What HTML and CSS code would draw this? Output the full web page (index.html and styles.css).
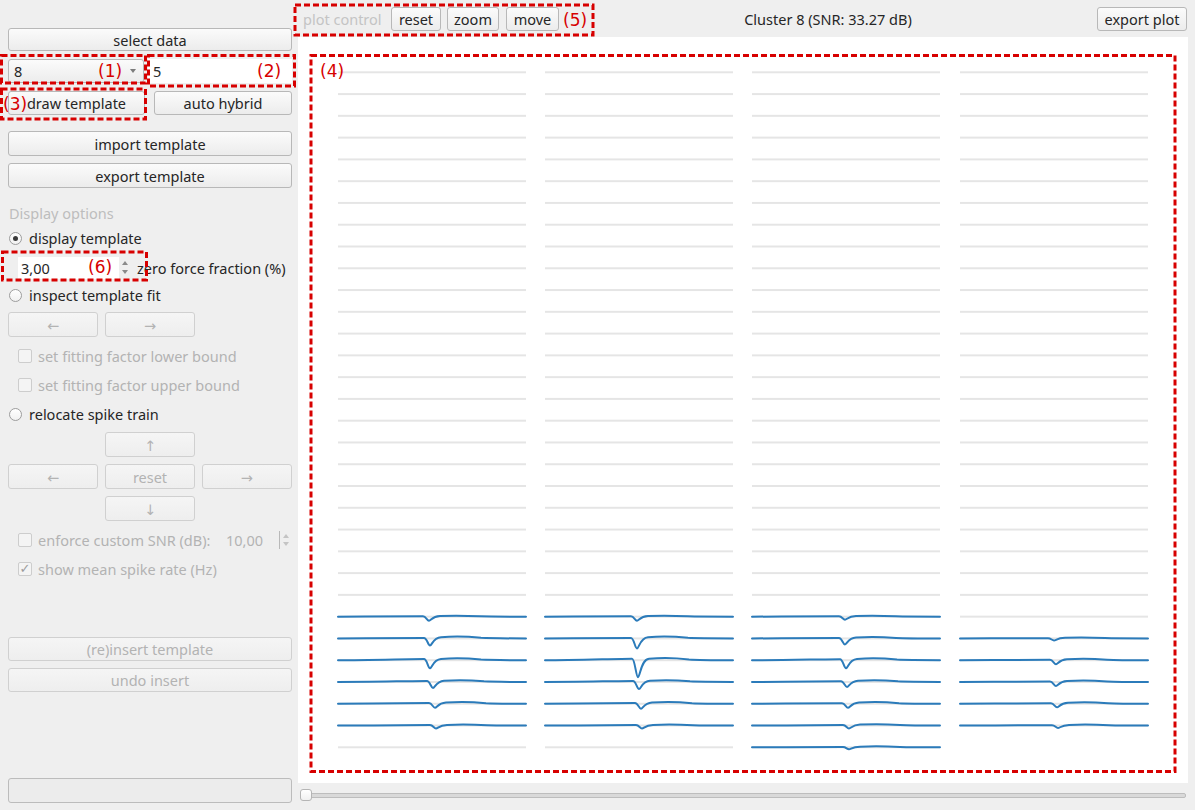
FILE: index.html
```html
<!DOCTYPE html>
<html>
<head>
<meta charset="utf-8">
<title>Template editor</title>
<link rel="stylesheet" href="styles.css">
</head>
<body>
<div class="app">
  <aside class="side">
    <button class="btn b-select">select data</button>
    <div class="row-combo">
      <div class="combo"><span class="combo-val">8</span><span class="caret"></span></div>
      <div class="lineedit">5</div>
    </div>
    <div class="row-2">
      <button class="btn">draw template</button>
      <button class="btn">auto hybrid</button>
    </div>
    <button class="btn b-import">import template</button>
    <button class="btn b-export">export template</button>
    <div class="group-title">Display options</div>
    <div class="opt r-display"><span class="radio checked"></span><span>display template</span></div>
    <div class="spin-row">
      <div class="spinbox">3,00</div>
      <div class="spin-arrows"><span class="up"></span><span class="down"></span></div>
      <span class="spin-label">zero force fraction (%)</span>
    </div>
    <div class="opt r-inspect"><span class="radio"></span><span>inspect template fit</span></div>
    <div class="grid3 g-fit">
      <button class="btn dis">←</button>
      <button class="btn dis">→</button>
    </div>
    <div class="opt check-row c-lower dis"><span class="check"></span><span>set fitting factor lower bound</span></div>
    <div class="opt check-row c-upper dis"><span class="check"></span><span>set fitting factor upper bound</span></div>
    <div class="opt r-relocate"><span class="radio"></span><span>relocate spike train</span></div>
    <div class="grid3 g-up"><button class="btn dis col2">↑</button></div>
    <div class="grid3 g-mid">
      <button class="btn dis">←</button>
      <button class="btn dis">reset</button>
      <button class="btn dis">→</button>
    </div>
    <div class="grid3 g-down"><button class="btn dis col2">↓</button></div>
    <div class="opt check-row c-snr dis">
      <span class="check"></span><span>enforce custom SNR (dB):</span>
      <span class="snr-val">10,00</span>
      <span class="snr-spin"><span class="up"></span><span class="down"></span></span>
    </div>
    <div class="opt check-row c-rate dis"><span class="check checked">✓</span><span>show mean spike rate (Hz)</span></div>
    <button class="btn dis b-reinsert">(re)insert template</button>
    <button class="btn dis b-undo">undo insert</button>
    <div class="progress"></div>
  </aside>

  <main class="pane">
    <div class="plotbar">
      <span class="pc-label">plot control</span>
      <button class="btn tb b-reset">reset</button>
      <button class="btn tb b-zoom">zoom</button>
      <button class="btn tb b-move">move</button>
      <div class="plot-title">Cluster 8 (SNR: 33.27 dB)</div>
      <button class="btn tb b-expplot">export plot</button>
    </div>
    <div class="canvas">
      <svg class="plot" width="890" height="746" viewBox="0 0 890 746">
        <defs>
          <pattern id="rows" patternUnits="userSpaceOnUse" x="0" y="24.413" width="890" height="21.774">
            <line x1="0" x2="890" y1="10.887" y2="10.887" stroke="#dcdcdc" stroke-width="1.5"/>
          </pattern>
        </defs>
        <rect x="40" y="24.413" width="188" height="696.77" fill="url(#rows)"/>
        <rect x="247" y="24.413" width="188" height="696.77" fill="url(#rows)"/>
        <rect x="454" y="24.413" width="188" height="696.77" fill="url(#rows)"/>
        <rect x="662" y="24.413" width="188" height="675.0" fill="url(#rows)"/>

        <g fill="none" stroke="#2b7bba" stroke-width="2" stroke-linejoin="round" stroke-linecap="round">
          <!-- column 1 -->
          <path transform="translate(40,579.65)" d="M0 0 C30 0 70 -0.3 85 -0.3 C88 -0.3 89 4 91 4 C93 4 94 -0.3 102 -0.6 C112 -1 128 -1 142 -0.3 C152 0 170 0 188 0"/>
          <path transform="translate(40,601.42)" d="M0 0 C30 0 71 -0.5 86 -0.5 C89 -0.5 90 7 92 7 C94 7 95 -0.6 103 -1.2 C113 -2 129 -2 143 -0.6 C153 0 171 0 188 0"/>
          <path transform="translate(40,623.20)" d="M0 0 C30 0 71 -1.2 86 -1.2 C89 -1.2 90 8 92 8 C94 8 95 -0.6 103 -1.2 C113 -2 129 -2 143 -0.6 C153 0 171 0 188 0"/>
          <path transform="translate(40,644.97)" d="M0 0 C30 0 74 -1 89 -1 C92 -1 93 6 95 6 C97 6 98 -0.6 106 -1.2 C116 -2 132 -2 146 -0.6 C156 0 174 0 188 0"/>
          <path transform="translate(40,666.75)" d="M0 0 C30 0 76 -0.8 91 -0.8 C94 -0.8 95 4 97 4 C99 4 100 -0.6 108 -1.2 C118 -2 134 -2 148 -0.6 C158 0 176 0 188 0"/>
          <path transform="translate(40,688.52)" d="M0 0 C30 0 77 -0.5 92 -0.5 C95 -0.5 96 3 98 3 C100 3 101 -0.3 109 -0.6 C119 -1 135 -1 149 -0.3 C159 0 177 0 188 0"/>
          <!-- column 2 -->
          <path transform="translate(247,579.65)" d="M0 0 C30 0 71 -0.3 86 -0.3 C89 -0.3 90 4 92 4 C94 4 95 -0.3 103 -0.6 C113 -1 129 -1 143 -0.3 C153 0 171 0 188 0"/>
          <path transform="translate(247,601.42)" d="M0 0 C30 0 71 -0.5 86 -0.5 C89 -0.5 90 10 92 10 C94 10 95 -0.6 103 -1.2 C113 -2 129 -2 143 -0.6 C153 0 171 0 188 0"/>
          <path transform="translate(247,623.20)" d="M0 0 C30 0 72 -1.5 87 -1.5 C90 -1.5 91 17 93 17 C95 17 96 -0.8 104 -1.5 C114 -2.5 130 -2.5 144 -0.8 C154 0 172 0 188 0"/>
          <path transform="translate(247,644.97)" d="M0 0 C30 0 73 -1 88 -1 C91 -1 92 7 94 7 C96 7 97 -0.6 105 -1.2 C115 -2 131 -2 145 -0.6 C155 0 173 0 188 0"/>
          <path transform="translate(247,666.75)" d="M0 0 C30 0 75 -0.8 90 -0.8 C93 -0.8 94 5 96 5 C98 5 99 -0.6 107 -1.2 C117 -2 133 -2 147 -0.6 C157 0 175 0 188 0"/>
          <path transform="translate(247,688.52)" d="M0 0 C30 0 76 -0.5 91 -0.5 C94 -0.5 95 3 97 3 C99 3 100 -0.3 108 -0.6 C118 -1 134 -1 148 -0.3 C158 0 176 0 188 0"/>
          <!-- column 3 -->
          <path transform="translate(454,579.65)" d="M0 0 C30 0 72 -0.3 87 -0.3 C90 -0.3 91 3 93 3 C95 3 96 -0.3 104 -0.6 C114 -1 130 -1 144 -0.3 C154 0 172 0 188 0"/>
          <path transform="translate(454,601.42)" d="M0 0 C30 0 72 -0.5 87 -0.5 C90 -0.5 91 6 93 6 C95 6 96 -0.5 104 -0.9 C114 -1.5 130 -1.5 144 -0.5 C154 0 172 0 188 0"/>
          <path transform="translate(454,623.20)" d="M0 0 C30 0 73 -1 88 -1 C91 -1 92 8 94 8 C96 8 97 -0.6 105 -1.2 C115 -2 131 -2 145 -0.6 C155 0 173 0 188 0"/>
          <path transform="translate(454,644.97)" d="M0 0 C30 0 74 -0.8 89 -0.8 C92 -0.8 93 5 95 5 C97 5 98 -0.6 106 -1.2 C116 -2 132 -2 146 -0.6 C156 0 174 0 188 0"/>
          <path transform="translate(454,666.75)" d="M0 0 C30 0 75 -0.6 90 -0.6 C93 -0.6 94 4 96 4 C98 4 99 -0.6 107 -1.2 C117 -2 133 -2 147 -0.6 C157 0 175 0 188 0"/>
          <path transform="translate(454,688.52)" d="M0 0 C30 0 76 -0.5 91 -0.5 C94 -0.5 95 3 97 3 C99 3 100 -0.5 108 -0.9 C118 -1.5 134 -1.5 148 -0.5 C158 0 176 0 188 0"/>
          <path transform="translate(454,710.29)" d="M0 0 C30 0 76 -0.3 91 -0.3 C94 -0.3 95 2 97 2 C99 2 100 -0.3 108 -0.6 C118 -1 134 -1 148 -0.3 C158 0 176 0 188 0"/>
          <!-- column 4 -->
          <path transform="translate(662,601.42)" d="M0 0 C30 0 73 -0.2 88 -0.2 C91 -0.2 92 2 94 2 C96 2 97 -0.3 105 -0.6 C115 -1 131 -1 145 -0.3 C155 0 173 0 188 0"/>
          <path transform="translate(662,623.20)" d="M0 0 C30 0 75 -0.5 90 -0.5 C93 -0.5 94 4 96 4 C98 4 99 -0.5 107 -0.9 C117 -1.5 133 -1.5 147 -0.5 C157 0 175 0 188 0"/>
          <path transform="translate(662,644.97)" d="M0 0 C30 0 75 -0.5 90 -0.5 C93 -0.5 94 4 96 4 C98 4 99 -0.5 107 -0.9 C117 -1.5 133 -1.5 147 -0.5 C157 0 175 0 188 0"/>
          <path transform="translate(662,666.75)" d="M0 0 C30 0 76 -0.5 91 -0.5 C94 -0.5 95 3.5 97 3.5 C99 3.5 100 -0.5 108 -0.9 C118 -1.5 134 -1.5 148 -0.5 C158 0 176 0 188 0"/>
          <path transform="translate(662,688.52)" d="M0 0 C30 0 77 -0.3 92 -0.3 C95 -0.3 96 2.5 98 2.5 C100 2.5 101 -0.3 109 -0.6 C119 -1 135 -1 149 -0.3 C159 0 177 0 188 0"/>
        </g>
      </svg>
    </div>
    <div class="slider">
      <div class="groove"></div>
      <div class="handle"></div>
    </div>
  </main>
</div>

<svg class="annot" width="1195" height="810" viewBox="0 0 1195 810">
  <g fill="none" stroke="#d70000" stroke-width="3" stroke-dasharray="6 3">
    <rect x="1.5" y="55.5" width="144" height="27.5"/>
    <rect x="148.5" y="55.5" width="146" height="30.5"/>
    <rect x="1.5" y="89" width="144" height="30"/>
    <rect x="311" y="55.5" width="864" height="716"/>
    <rect x="295" y="5" width="298" height="30"/>
    <rect x="2.5" y="252" width="144" height="28"/>
  </g>
  <g class="annot-text" fill="#d70000">
    <text x="98" y="71" dominant-baseline="central">(1)</text>
    <text x="257" y="71" dominant-baseline="central">(2)</text>
    <text x="3" y="104" dominant-baseline="central">(3)</text>
    <text x="320" y="71" dominant-baseline="central">(4)</text>
    <text x="563" y="20" dominant-baseline="central">(5)</text>
    <text x="88" y="267" dominant-baseline="central">(6)</text>
  </g>
</svg>
</body>
</html>
```

FILE: styles.css
```css
* { box-sizing: border-box; }

html, body {
  margin: 0;
  padding: 0;
}

body {
  width: 1195px;
  height: 810px;
  overflow: hidden;
  position: relative;
  background: #efefef;
  font-family: "Noto Sans", "DejaVu Sans", sans-serif;
  font-size: 14.5px;
  color: #262626;
}

.app {
  display: flex;
  height: 810px;
}

/* ---------- left side panel ---------- */
.side {
  width: 298px;
  flex: none;
  padding: 0 6px 0 8px;
  display: flex;
  flex-direction: column;
}

.btn {
  font: inherit;
  color: #262626;
  background: linear-gradient(#fbfbfb, #ececec);
  border: 1px solid #b8b8b8;
  border-radius: 3px;
  padding: 0;
  height: 25px;
  line-height: 20px;
  text-align: center;
  white-space: nowrap;
}

.btn.dis {
  color: #b3b3b3;
  border-color: #d0d0d0;
  background: linear-gradient(#f5f5f5, #eeeeee);
}

.b-select { margin-top: 28px; height: 23px; }

.row-combo {
  margin-top: 8px;
  height: 24px;
  display: flex;
  gap: 4px;
}

.combo {
  width: 136px;
  height: 24px;
  border: 1px solid #b8b8b8;
  border-radius: 3px;
  background: linear-gradient(#fbfbfb, #ececec);
  display: flex;
  align-items: center;
  padding-left: 5px;
}

.combo-val { flex: 1; }

.caret {
  width: 0;
  height: 0;
  border-left: 3.5px solid transparent;
  border-right: 3.5px solid transparent;
  border-top: 4px solid #7c7c7c;
  margin-right: 7px;
}

.lineedit {
  flex: 1;
  height: 24px;
  background: #fff;
  padding-left: 5px;
  line-height: 24px;
}

.row-2 {
  margin-top: 8px;
  height: 24px;
  display: grid;
  grid-template-columns: 137px 1fr;
  gap: 9px;
}

.row-2 .btn { height: 24px; }

.b-import { margin-top: 16px; }
.b-export { margin-top: 7px; }

.group-title {
  margin-top: 15px;
  height: 20px;
  line-height: 20px;
  padding-left: 1px;
  color: #bdbdbd;
}

.opt {
  height: 20px;
  display: flex;
  align-items: center;
  white-space: nowrap;
}

.radio {
  width: 13px;
  height: 13px;
  margin-left: 1px;
  margin-right: 7px;
  border-radius: 50%;
  border: 1px solid #9d9d9d;
  background: linear-gradient(#ffffff, #f1f1f1);
  display: flex;
  align-items: center;
  justify-content: center;
  flex: none;
}

.radio.checked::after {
  content: "";
  width: 5px;
  height: 5px;
  border-radius: 50%;
  background: #3a3a3a;
}

.r-display { margin-top: 5px; }

.spin-row {
  margin-top: 7px;
  height: 25px;
  display: flex;
  align-items: center;
  padding-left: 10px;
}

.spinbox {
  width: 101px;
  height: 22px;
  background: #fff;
  line-height: 22px;
  padding-left: 3px;
}

.spin-arrows, .snr-spin {
  width: 11px;
  display: flex;
  flex-direction: column;
  align-items: center;
  gap: 5px;
}

.up {
  width: 0;
  height: 0;
  border-left: 3.5px solid transparent;
  border-right: 3.5px solid transparent;
  border-bottom: 4px solid #8a8a8a;
}

.down {
  width: 0;
  height: 0;
  border-left: 3.5px solid transparent;
  border-right: 3.5px solid transparent;
  border-top: 4px solid #8a8a8a;
}

.spin-label { margin-left: 7px; white-space: nowrap; }

.r-inspect { margin-top: 5px; }

.grid3 {
  display: grid;
  grid-template-columns: repeat(3, 1fr);
  gap: 6.5px;
  height: 25px;
}

.grid3 .col2 { grid-column: 2; }

.g-fit { margin-top: 7px; }

.check-row { padding-left: 10px; }

.check {
  width: 14px;
  height: 14px;
  border: 1px solid #cdcdcd;
  border-radius: 2px;
  background: #f4f4f4;
  margin-right: 6px;
  flex: none;
  font-size: 13px;
  line-height: 12px;
  text-align: center;
  color: #9c9c9c;
  font-family: "DejaVu Sans", sans-serif;
}

.opt.dis { color: #b3b3b3; }

.c-lower { margin-top: 9px; }
.c-upper { margin-top: 9px; }
.r-relocate { margin-top: 9px; }

.g-up { margin-top: 8px; }
.g-mid { margin-top: 7px; }
.g-down { margin-top: 7px; }

.c-snr { margin-top: 9px; }

.snr-val { margin-left: auto; }

.snr-spin {
  margin-left: 16px;
  margin-right: 2px;
  border-left: 1px solid #b9b9b9;
  height: 18px;
  justify-content: center;
  align-items: flex-end;
  padding-right: 1px;
  gap: 4px;
}

.snr-spin .up { border-bottom-color: #c4c4c4; }
.snr-spin .down { border-top-color: #c4c4c4; }

.c-rate { margin-top: 9px; }

.b-reinsert { margin-top: 58px; height: 24px; }
.b-undo { margin-top: 7px; height: 24px; }

.progress {
  margin-top: 86px;
  height: 25px;
  border: 1px solid #bcbcbc;
  border-radius: 3px;
  background: #ececec;
}

/* ---------- right plot pane ---------- */
.pane {
  flex: 1;
  display: flex;
  flex-direction: column;
  padding-right: 7px;
}

.plotbar {
  height: 37px;
  display: flex;
  align-items: flex-start;
  padding-top: 7px;
  padding-left: 5px;
}

.pc-label {
  width: 88px;
  line-height: 24px;
  color: #c4c4c4;
  white-space: nowrap;
}

.tb { height: 24px; }
.b-reset { width: 50px; }
.b-zoom { width: 52px; margin-left: 6px; }
.b-move { width: 53px; margin-left: 7px; }

.plot-title {
  flex: 1;
  text-align: center;
  line-height: 24px;
  color: #262626;
}

.b-expplot { width: 90px; margin-right: 1px; }

.canvas {
  height: 746px;
  background: #fff;
}

.plot { display: block; }

.slider {
  position: relative;
  flex: 1;
}

.groove {
  margin: 10px 2px 0 2px;
  height: 5px;
  border: 1px solid #bdbdbd;
  border-radius: 2px;
  background: #d9d9d9;
}

.handle {
  position: absolute;
  left: 2px;
  top: 6px;
  width: 12px;
  height: 12px;
  border: 1px solid #b5b5b5;
  border-radius: 3px;
  background: linear-gradient(#ffffff, #f0f0f0);
}

/* ---------- annotation overlay ---------- */
.annot {
  position: absolute;
  left: 0;
  top: 0;
  pointer-events: none;
}

.annot-text text {
  font-family: "DejaVu Sans", sans-serif;
  font-size: 17px;
}
```
